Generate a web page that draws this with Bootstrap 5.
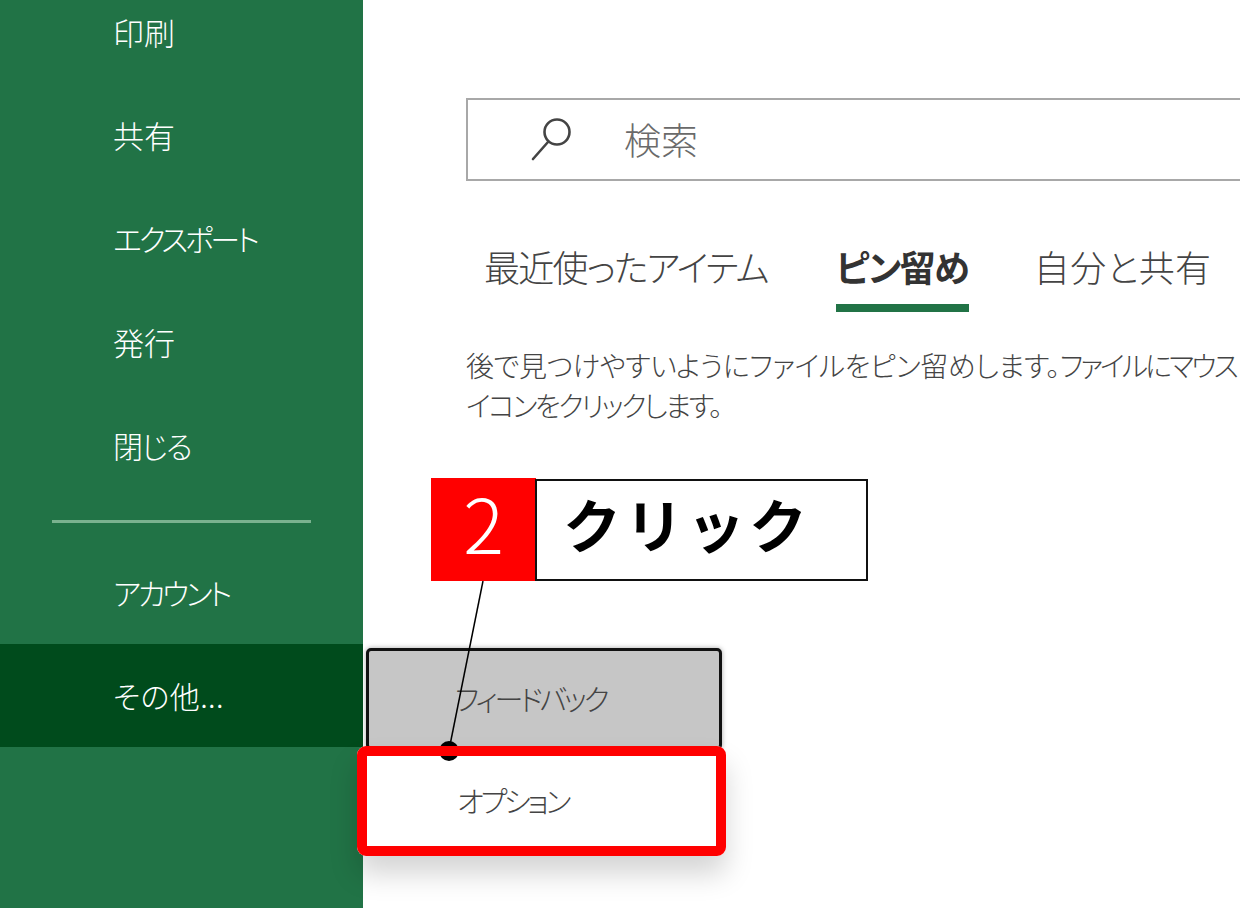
<!DOCTYPE html>
<html lang="ja">
<head>
  <meta charset="UTF-8" />
  <meta name="viewport" content="width=device-width, initial-scale=1.0"/>
  <title>その他 - オプション</title>
  <link href="https://cdn.jsdelivr.net/npm/bootstrap@5.3.2/dist/css/bootstrap.min.css" rel="stylesheet" />
  <style>
    html, body { height: 100%; overflow: hidden; }
    body { font-family: "Noto Sans CJK JP", "Liberation Sans", sans-serif; font-feature-settings: "palt"; color: #444; background: #fff; position: relative; }
    .page-wrap { width: 1240px; height: 908px; overflow: hidden; }
    .side-pane { width: 363px; flex: none; background: #217346; color: #fff; height: 908px; }
    .side-list { margin-top: -20px; }
    .side-item { height: 103.5px; padding-left: 113px; font-size: 31px; font-weight: 300; display: flex; align-items: center; white-space: nowrap; }
    .side-item.tight { font-size: 30px; letter-spacing: -3.3px; }
    .side-item.snug { font-size: 30px; letter-spacing: -1.6px; }
    .side-item.plain { font-size: 30px; letter-spacing: .4px; }
    .side-item.is-active { background: #004b1c; height: 103px; }
    .side-rule { height: 3px; background: #7ab28f; margin: 22px 52px 18px 52px; opacity: 1; border: 0; }
    .main-pane { flex: 1 1 auto; padding: 98px 0 0 103px; min-width: 0; overflow: hidden; }
    .search-box { width: 900px; height: 83px; border: 2px solid #a8a8a8; padding-left: 62px; gap: 50px; }
    .search-word { font-size: 37px; font-weight: 300; color: #6a6a6a; }
    .tab-row { margin-top: 60px; padding-left: 18px; gap: 68px; height: 71px; }
    .tab-link { font-size: 36px; font-weight: 300; color: #444; line-height: 50px; white-space: nowrap; letter-spacing: .4px; }
    .tab-link.squeezed { letter-spacing: -1.7px; }
    .tab-link.is-active { font-weight: 700; color: #333; border-bottom: 8px solid #217346; height: 71px; width: 133px; letter-spacing: -1.5px; margin-right: -3px; }
    .help-text { margin-top: 33px; font-size: 28px; font-weight: 300; line-height: 40px; color: #444; white-space: nowrap; letter-spacing: -.4px; }
    .help-tail { letter-spacing: -2.9px; }
    .help-second { letter-spacing: -2.4px; }
    .callout { position: absolute; left: 431px; top: 478px; z-index: 5; }
    .callout-num { width: 105px; height: 103px; background: #f00; color: #fff; font-weight: 300; font-size: 76px; line-height: 1; padding-bottom: 18px; }
    .callout-text { width: 333px; height: 102px; margin: 1px 0 0 -1px; background: #fff; border: 2px solid #111; color: #000; font-size: 58px; font-weight: 700; padding: 0 0 14px 26px; white-space: nowrap; font-feature-settings: normal; letter-spacing: 4px; }
    .pop-menu { position: absolute; left: 357px; top: 648px; width: 369px; }
    .pop-feedback { margin: 0 4px 0 9px; height: 102px; background: #c6c6c6; border: 3px solid #111; border-radius: 5px; box-shadow: 0 0 5px rgba(0,0,0,.35); padding-left: 86px; font-size: 29px; font-weight: 300; color: #444; letter-spacing: -3.2px; }
    .pop-option { margin-top: -4px; height: 110px; background: #fff; padding-left: 100px; font-size: 29px; font-weight: 300; color: #444; letter-spacing: -3.3px; border-radius: 9px; box-shadow: 0 18px 28px rgba(0,0,0,.17); position: relative; z-index: 2; }
    .pointer-line { position: absolute; left: 0; top: 0; z-index: 3; pointer-events: none; }
    .pop-frame { position: absolute; left: 357px; top: 746px; width: 369px; height: 110px; border: 10px solid #f00; border-radius: 9px; z-index: 4; pointer-events: none; }
  </style>
</head>
<body>

  <div class="page-wrap d-flex">
    <nav class="side-pane">
      <div class="side-list">
        <div class="side-item">印刷</div>
        <div class="side-item">共有</div>
        <div class="side-item tight">エクスポート</div>
        <div class="side-item">発行</div>
        <div class="side-item snug">閉じる</div>
        <hr class="side-rule">
        <div class="side-item tight">アカウント</div>
        <div class="side-item plain is-active">その他...</div>
      </div>
    </nav>

    <main class="main-pane">
      <div class="search-box d-flex align-items-center">
        <svg width="44" height="46" viewBox="0 0 44 46" fill="none" stroke="#444" stroke-width="2.6" stroke-linecap="round">
          <circle cx="27" cy="15" r="12.5"/>
          <path d="M18 25 L3 42"/>
        </svg>
        <span class="search-word">検索</span>
      </div>

      <div class="tab-row d-flex">
        <div class="tab-link squeezed">最近使ったアイテム</div>
        <div class="tab-link is-active">ピン留め</div>
        <div class="tab-link">自分と共有</div>
      </div>

      <div class="help-text">
        後で見つけやすいようにファイルをピン留めします。<span class="help-tail">ファイルにマウス</span><br>
        <span class="help-second">イコンをクリックします。</span>
      </div>
    </main>
  </div>

  <div class="callout d-flex">
    <div class="callout-num d-flex align-items-center justify-content-center">2</div>
    <div class="callout-text d-flex align-items-center">クリック</div>
  </div>

  <div class="pop-menu">
    <div class="pop-feedback d-flex align-items-center">フィードバック</div>
    <div class="pop-option d-flex align-items-center">オプション</div>
  </div>

  <svg class="pointer-line" width="1240" height="908">
    <path d="M483 581 L449 750" stroke="#000" stroke-width="1.5"/>
    <circle cx="449" cy="751" r="10" fill="#000"/>
  </svg>
  <div class="pop-frame"></div>

  <script src="https://cdn.jsdelivr.net/npm/bootstrap@5.3.2/dist/js/bootstrap.bundle.min.js"></script>
</body>
</html>
